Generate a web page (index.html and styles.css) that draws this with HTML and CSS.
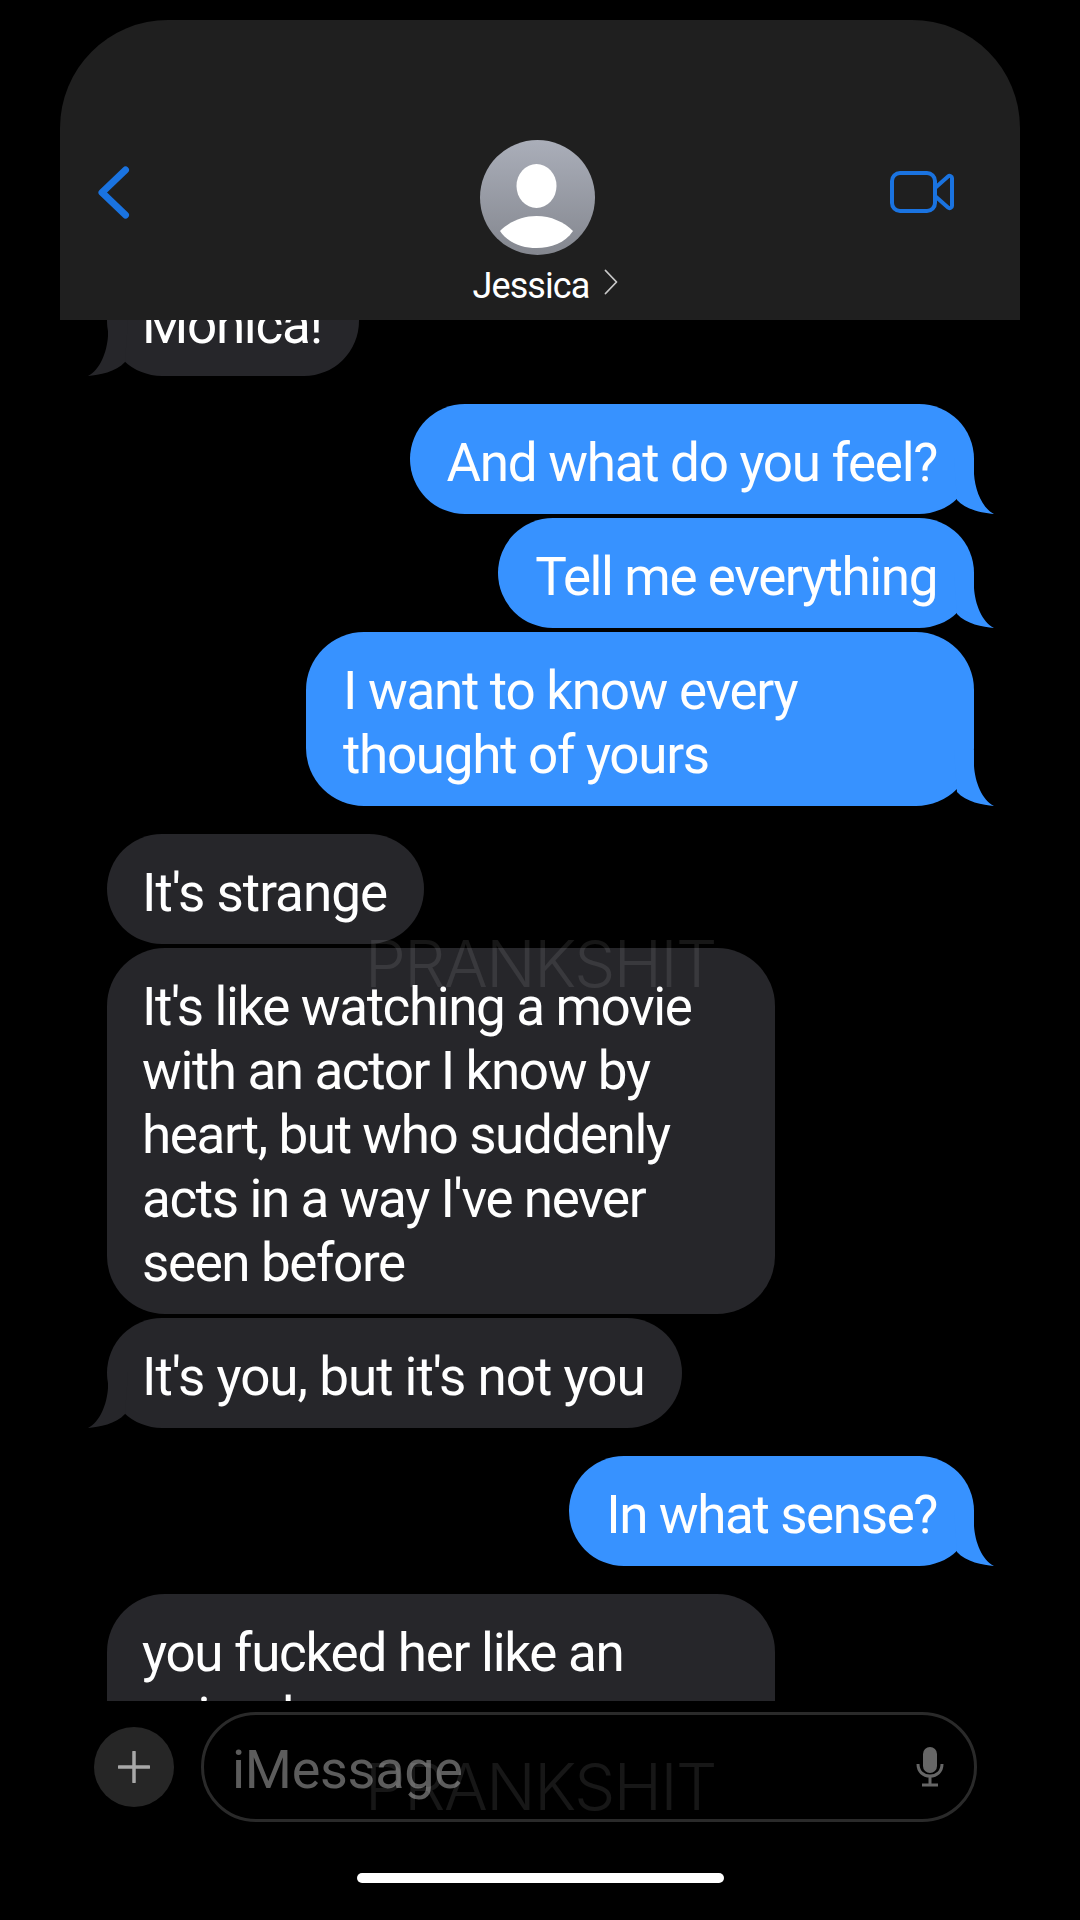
FILE: index.html
```html
<!DOCTYPE html>
<html lang="en">
<head>
  <meta charset="UTF-8"/>
  <meta name="viewport" content="width=device-width,initial-scale=1.0"/>
  <title>Messages</title>
  <link rel="stylesheet" href="styles.css">
</head>
<body>
  <div class="screen">
    <header class="nav">
      <svg class="back" width="33" height="53" viewBox="0 0 33 53"><path d="M28.500 4 5 26.500 28.500 49" fill="none" stroke="#1a73e0" stroke-width="7" stroke-linecap="round" stroke-linejoin="round"/></svg>
      <div class="contact">
        <svg class="avatar" width="115" height="115" viewBox="0 0 115 115">
          <defs>
            <linearGradient id="avatarFill" x1="0" y1="0" x2="0" y2="1">
              <stop offset="0" stop-color="#aaaeb9"/>
              <stop offset="1" stop-color="#84878f"/>
            </linearGradient>
          </defs>
          <circle cx="57.5" cy="57.5" r="57.5" fill="url(#avatarFill)"/>
          <ellipse cx="56.5" cy="46" rx="20" ry="22" fill="#fff"/>
          <path d="M20 91C29 82 42 76 56.500 76S84 82 93 91C85 103 71 108 56.500 108S28 103 20 91Z" fill="#fff"/>
        </svg>
        <div class="name">
          <span>Jessica</span>
          <svg width="14" height="26" viewBox="0 0 14 26"><path d="M1.500 1.500 12.500 13 1.500 24.500" fill="none" stroke="#c8c8c8" stroke-width="1.800" stroke-linecap="round" stroke-linejoin="round"/></svg>
        </div>
      </div>
      <svg class="video" width="64" height="42" viewBox="0 0 64 42">
        <rect x="2" y="2" width="43" height="38" rx="8" fill="none" stroke="#1a73e0" stroke-width="4"/>
        <path d="M45 17 58 5.500c1.500-1.300 4-.5 4 1.500v28c0 2-2.500 2.800-4 1.500L45 25" fill="none" stroke="#1a73e0" stroke-width="4" stroke-linejoin="round"/>
      </svg>
    </header>

    <main class="thread">
      <div class="bubble in tailed first">Monica!
        <svg class="tail" width="40" height="56" viewBox="0 0 40 56"><path d="M20 0V16C19 32 12 50 0 56 11 55 28 52 37 42L40 0Z"/></svg>
      </div>

      <div class="bubble out tailed group">And what do you feel?
        <svg class="tail" width="40" height="56" viewBox="0 0 40 56"><path d="M20 0V16C21 32 28 50 40 56 29 55 12 52 3 42L0 0Z"/></svg>
      </div>
      <div class="bubble out tailed tight">Tell me everything
        <svg class="tail" width="40" height="56" viewBox="0 0 40 56"><path d="M20 0V16C21 32 28 50 40 56 29 55 12 52 3 42L0 0Z"/></svg>
      </div>
      <div class="bubble out tailed wide">I want to know every<br>thought of yours
        <svg class="tail" width="40" height="56" viewBox="0 0 40 56"><path d="M20 0V16C21 32 28 50 40 56 29 55 12 52 3 42L0 0Z"/></svg>
      </div>

      <div class="bubble in group loose">It's strange</div>
      <div class="bubble in wide tight">It's like watching a movie<br>with an actor I know by<br>heart, but who suddenly<br>acts in a way I've never<br>seen before</div>
      <div class="bubble in tailed loose">It's you, but it's not you
        <svg class="tail" width="40" height="56" viewBox="0 0 40 56"><path d="M20 0V16C19 32 12 50 0 56 11 55 28 52 37 42L40 0Z"/></svg>
      </div>

      <div class="bubble out tailed group tight">In what sense?
        <svg class="tail" width="40" height="56" viewBox="0 0 40 56"><path d="M20 0V16C21 32 28 50 40 56 29 55 12 52 3 42L0 0Z"/></svg>
      </div>

      <div class="bubble in wide group">you fucked her like an<br>animal</div>
    </main>

    <footer class="composer">
      <div class="plus">
        <svg width="32" height="32" viewBox="0 0 32 32"><path d="M16 1v30M1 16h30" stroke="#a8a8a8" stroke-width="3.500" stroke-linecap="round"/></svg>
      </div>
      <div class="input">
        <span class="placeholder">iMessage</span>
        <svg width="28" height="40" viewBox="0 0 28 40">
          <rect x="7" y="0" width="14" height="26" rx="7" fill="#666"/>
          <path d="M2 17c0 7.500 5 12 12 12s12-4.500 12-12M14 29v8M6 38h16" fill="none" stroke="#666" stroke-width="3"/>
        </svg>
      </div>
    </footer>
    <div class="home-bar"></div>

    <div class="watermark mark-top">PRANKSHIT</div>
    <div class="watermark mark-bottom">PRANKSHIT</div>
  </div>
</body>
</html>
```

FILE: styles.css
```css
* { box-sizing: border-box; }
html, body { margin: 0; background: #000; }
body { font-family: "Roboto", "Liberation Sans", sans-serif; color: #fff; }

.screen {
  position: relative;
  width: 1080px;
  height: 1920px;
  padding-top: 20px;
  display: flex;
  flex-direction: column;
  overflow: hidden;
  background: #000;
}

/* top bar */
.nav {
  flex: none;
  height: 300px;
  margin: 0 60px;
  padding: 120px 37px 0;
  display: grid;
  grid-template-columns: 1fr auto 1fr;
  align-items: start;
  background: #1f1f1f;
  border-radius: 108px 108px 0 0;
}
.back { display: block; margin-top: 26px; }
.video { display: block; margin: 31px 29px 0 0; justify-self: end; }
.contact { display: flex; flex-direction: column; align-items: center; }
.avatar { display: block; margin-right: 5px; }
.name {
  display: flex;
  align-items: center;
  gap: 14px;
  margin: 7px 0 0 10px;
  font-size: 36px;
  line-height: 40px;
  letter-spacing: -0.9px;
}
.name span { padding-top: 4px; }
.name svg { margin-bottom: 4px; }

/* messages */
.thread {
  flex: none;
  height: 1381px;
  padding: 0 106px 0 107px;
  display: flex;
  flex-direction: column;
  gap: 4px;
  overflow: hidden;
}
.bubble {
  position: relative;
  flex: none;
  width: fit-content;
  padding: 27px 37px 19px;
  border-radius: 55px;
  font-size: 53px;
  line-height: 64px;
  letter-spacing: -1.3px;
}
.bubble.wide { width: 668px; border-radius: 58px; }
.bubble.group { margin-top: 24px; }
.bubble.first { margin-top: -54px; }
.bubble.tight { letter-spacing: -1.4px; }
.bubble.loose { letter-spacing: -1px; }
.in { align-self: flex-start; background: #26262a; padding-left: 35px; }
.out { align-self: flex-end; background: #3792ff; }
.tail { position: absolute; bottom: 0; display: none; }
.tailed .tail { display: block; }
.out .tail { right: -20px; fill: #3792ff; }
.in .tail { left: -19px; fill: #26262a; }

/* message box */
.composer {
  flex: none;
  margin-top: 11px;
  padding-left: 94px;
  display: flex;
  align-items: center;
  gap: 27px;
}
.plus {
  width: 80px;
  height: 80px;
  border-radius: 50%;
  background: #262626;
  display: flex;
  align-items: center;
  justify-content: center;
}
.input {
  width: 776px;
  height: 110px;
  padding: 0 30px 0 28px;
  border: 3px solid #2a2a2a;
  border-radius: 55px;
  display: flex;
  align-items: center;
  justify-content: space-between;
}
.placeholder {
  padding-top: 4px;
  font-size: 54px;
  letter-spacing: -0.3px;
  color: #5c5c5c;
}

.home-bar {
  flex: none;
  width: 367px;
  height: 10px;
  margin: 51px auto 0;
  border-radius: 5px;
  background: #fff;
}

/* stamped over the picture */
.watermark {
  position: absolute;
  left: 365px;
  font-family: "Inter", "Liberation Sans", sans-serif;
  font-size: 65px;
  line-height: 1;
  font-weight: 300;
  letter-spacing: -1.5px;
  color: rgba(255,255,255,0.09);
  white-space: nowrap;
}
.mark-top { top: 931px; }
.mark-bottom { top: 1754px; }
```
